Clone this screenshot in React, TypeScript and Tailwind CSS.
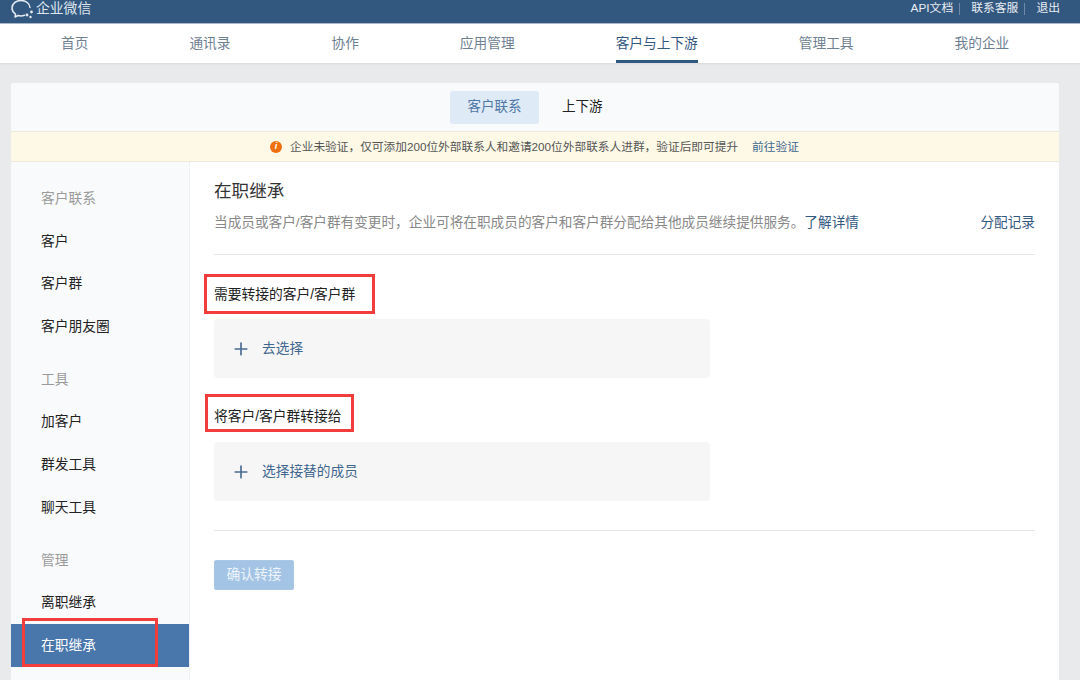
import { Plus } from 'lucide-react';

const navItems = ['首页', '通讯录', '协作', '应用管理', '客户与上下游', '管理工具', '我的企业'];

const sideGroups = [
  { title: '客户联系', items: ['客户', '客户群', '客户朋友圈'] },
  { title: '工具', items: ['加客户', '群发工具', '聊天工具'] },
  { title: '管理', items: ['离职继承', '在职继承'] },
];

function Logo() {
  return (
    <svg width="24" height="20" viewBox="0 0 24 20" fill="none" className="shrink-0">
      <path d="M13.500 15.300C12.400 15.700 11.200 15.900 10 15.900c-1 0-2-.1-3-.4L4 17l.5-3C2.400 12.600 1 10.400 1 8c0-4.200 4-7.500 9-7.500s8.700 3 9 7" stroke="#e6ecf2" strokeWidth="1.500" strokeLinecap="round" strokeLinejoin="round" />
      <circle cx="16" cy="15" r="1.400" fill="#e6ecf2" />
      <circle cx="20.500" cy="12" r="1.400" fill="#e6ecf2" />
      <circle cx="19.500" cy="17" r="1.200" fill="#e6ecf2" />
    </svg>
  );
}

function RedBox({ className }: { className: string }) {
  return <div className={`absolute border-[3px] border-[#f23d3d] pointer-events-none ${className}`} />;
}

function PickBox({ label }: { label: string }) {
  return (
    <div className="flex h-[59px] w-[496px] items-center rounded-sm bg-[#f6f6f6] pl-[17px]">
      <Plus size={20} strokeWidth={2} className="text-[#4a6c91]" />
      <span className="ml-[11px] mt-[1px] text-[13.700px] text-[#3f668f]">{label}</span>
    </div>
  );
}

export default function App() {
  return (
    <div
      className="relative h-[680px] w-[1080px] overflow-hidden bg-[#e8eaec]"
      style={{ fontFamily: '"Liberation Sans", "Noto Sans CJK SC", sans-serif' }}
    >
      {/* Top bar */}
      <div className="flex h-[24px] items-center justify-between overflow-hidden border-b border-[#a9b9ca] bg-[#33587f] pl-[11px] pr-[20px]">
        <div className="-mt-[4px] flex items-center">
          <Logo />
          <span className="ml-[1px] text-[13.800px] text-[#dfe6ee]">企业微信</span>
        </div>
        <div className="-mt-[5px] flex items-center text-[11.800px] text-[#e8edf3]">
          <span>API文档</span>
          <span className="ml-[6px] mr-[11px] h-[12px] w-px bg-[#6f8aa8]" />
          <span>联系客服</span>
          <span className="ml-[6px] mr-[11px] h-[12px] w-px bg-[#6f8aa8]" />
          <span>退出</span>
        </div>
      </div>

      {/* Main nav */}
      <div className="flex h-[39px] items-stretch gap-[101px] bg-white pl-[61px] shadow-[0_1px_2px_rgba(0,0,0,0.08)]">
        {navItems.map((item) => {
          const active = item === '客户与上下游';
          return (
            <div
              key={item}
              className={`flex items-center border-b-[3px] pt-[4px] text-[13.700px] ${
                active ? 'border-[#33587f] text-[#33587f]' : 'border-transparent text-[#6f7f92]'
              }`}
            >
              {item}
            </div>
          );
        })}
      </div>

      {/* Card */}
      <div className="ml-[11px] mt-[20px] flex h-[620px] w-[1048px] flex-col overflow-hidden rounded-t-[3px] bg-white">
        <div className="flex h-[48px] items-center bg-[#f9fafc] pl-[439px]">
          <div className="flex h-[33px] w-[89px] items-center justify-center rounded-[3px] bg-[#dfeaf7] text-[13.500px] text-[#4f77a8]">
            客户联系
          </div>
          <div className="ml-[23px] text-[13.500px] text-[#222]">上下游</div>
        </div>

        <div className="flex h-[31px] items-center border-y border-[#eeeadb] bg-[#fef9e7] pl-[259px] text-[11.700px] text-[#555]">
          <span className="flex h-[12px] w-[12px] items-center justify-center rounded-full bg-[#f0700f] text-[9px] font-bold italic text-white">
            i
          </span>
          <span className="ml-[8px]">企业未验证，仅可添加200位外部联系人和邀请200位外部联系人进群，验证后即可提升</span>
          <span className="ml-[14px] text-[#3f668f]">前往验证</span>
        </div>

        <div className="flex flex-1">
          {/* Sidebar */}
          <div className="w-[179px] shrink-0 border-r border-dotted border-[#e4e6ea] bg-[#f9fafc] pt-[15px]">
            {sideGroups.map((group) => (
              <div key={group.title} className="mb-[10px]">
                <div className="flex h-[42.700px] items-center pl-[30px] pt-[2px] text-[13.750px] text-[#9a9a9a]">{group.title}</div>
                {group.items.map((item) => {
                  const active = item === '在职继承';
                  return (
                    <div
                      key={item}
                      className={`flex h-[42.700px] items-center pl-[30px] pt-[2px] text-[13.750px] ${
                        active ? 'bg-[#4a77ab] text-white' : 'text-[#222]'
                      }`}
                    >
                      {item}
                    </div>
                  );
                })}
              </div>
            ))}
          </div>

          {/* Content */}
          <div className="flex-1 pl-[24px] pr-[24px] pt-[17px]">
            <h1 className="text-[17.600px] leading-[24px] text-[#333]">在职继承</h1>
            <div className="mt-[10px] flex items-center justify-between border-b border-[#e4e6e9] pb-[21px] text-[13.650px] leading-[20px]">
              <p className="text-[#888]">
                当成员或客户/客户群有变更时，企业可将在职成员的客户和客户群分配给其他成员继续提供服务。
                <span className="text-[#33587f]">了解详情</span>
              </p>
              <span className="text-[#33587f]">分配记录</span>
            </div>

            <h2 className="mt-[31px] text-[13.750px] leading-[18px] text-[#222]">需要转接的客户/客户群</h2>
            <div className="mt-[15px]">
              <PickBox label="去选择" />
            </div>

            <h2 className="mt-[30px] text-[13.750px] leading-[18px] text-[#222]">将客户/客户群转接给</h2>
            <div className="mt-[16px]">
              <PickBox label="选择接替的成员" />
            </div>

            <div className="mt-[29px] border-t border-[#e4e6e9] pt-[29px]">
              <button className="h-[30px] w-[80px] rounded-[2px] border border-[#a9c8e6] bg-[#a3c4e4] text-[13.750px] text-[#eef4fa]">
                确认转接
              </button>
            </div>
          </div>
        </div>
      </div>

      {/* Annotation boxes over the screenshot */}
      <RedBox className="left-[204px] top-[274px] h-[40px] w-[171px]" />
      <RedBox className="left-[205px] top-[394px] h-[38px] w-[149px]" />
      <RedBox className="left-[22px] top-[618px] h-[49px] w-[136px]" />
    </div>
  );
}
